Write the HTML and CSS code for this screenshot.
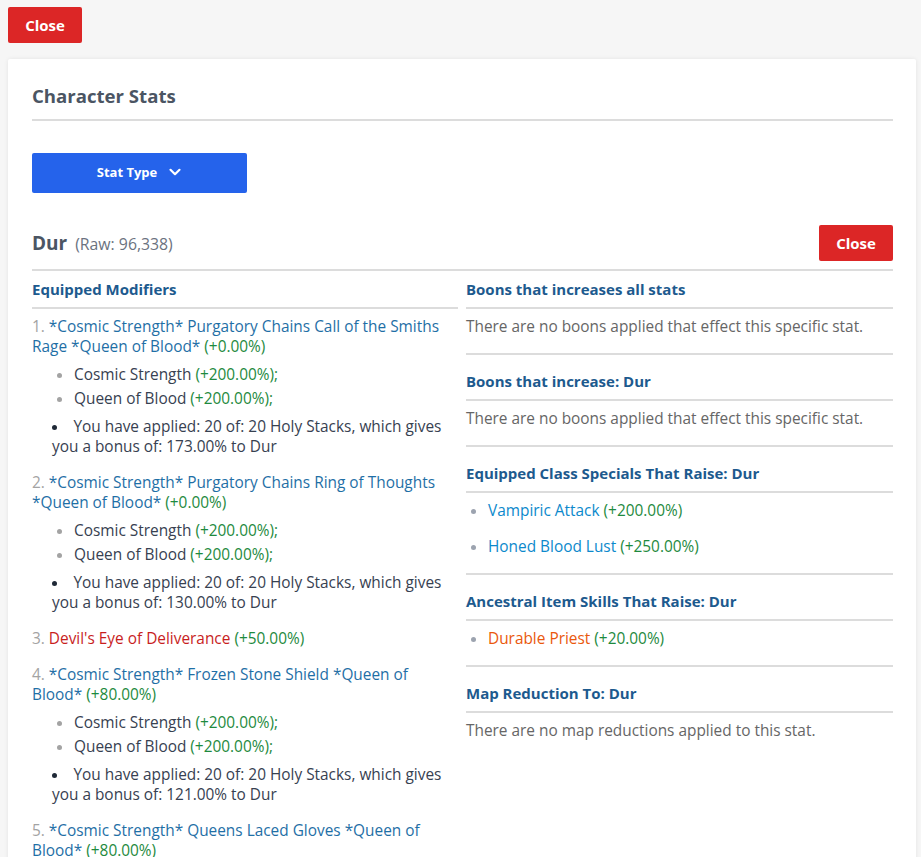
FILE: index.html
```html
<!DOCTYPE html>
<html lang="en">
<head>
<meta charset="utf-8">
<title>Character Stats</title>
<link rel="stylesheet" href="styles.css">
</head>
<body>
<div class="page">
  <button class="btn btn-red top-close">Close</button>
  <div class="card">
    <h2 class="card-title">Character Stats</h2>
    <hr class="rule">
    <button class="btn btn-blue dropdown"><span class="dd-label">Stat Type</span>
      <svg class="chev" width="14" height="14" viewBox="0 0 14 14"><path d="M2.5 4.8 L7 9.2 L11.5 4.8" fill="none" stroke="#fff" stroke-width="2.2" stroke-linecap="round" stroke-linejoin="round"/></svg>
    </button>
    <div class="stat-head">
      <div class="stat-name"><span class="stat-label">Dur</span><span class="stat-raw">(Raw: 96,338)</span></div>
      <button class="btn btn-red">Close</button>
    </div>
    <hr class="rule">
    <div class="cols">
      <div class="col">
        <h3 class="sec-title first">Equipped Modifiers</h3>
        <hr class="rule">
        <ol class="mods">
          <li class="mod">
            <p class="mod-line"><span class="num">1.</span> <span class="link">*Cosmic Strength* Purgatory Chains Call of the Smiths Rage *Queen of Blood*</span> <span class="pos">(+0.00%)</span></p>
            <ul class="affixes">
              <li>Cosmic Strength <span class="pos">(+200.00%);</span></li>
              <li>Queen of Blood <span class="pos">(+200.00%);</span></li>
            </ul>
            <ul class="holy"><li>You have applied: 20 of: 20 Holy Stacks, which gives you a bonus of: 173.00% to Dur</li></ul>
          </li>
          <li class="mod">
            <p class="mod-line"><span class="num">2.</span> <span class="link">*Cosmic Strength* Purgatory Chains Ring of Thoughts *Queen of Blood*</span> <span class="pos">(+0.00%)</span></p>
            <ul class="affixes">
              <li>Cosmic Strength <span class="pos">(+200.00%);</span></li>
              <li>Queen of Blood <span class="pos">(+200.00%);</span></li>
            </ul>
            <ul class="holy"><li>You have applied: 20 of: 20 Holy Stacks, which gives you a bonus of: 130.00% to Dur</li></ul>
          </li>
          <li class="mod">
            <p class="mod-line"><span class="num">3.</span> <span class="unique">Devil's Eye of Deliverance</span> <span class="pos">(+50.00%)</span></p>
          </li>
          <li class="mod">
            <p class="mod-line"><span class="num">4.</span> <span class="link">*Cosmic Strength* Frozen Stone Shield *Queen of Blood*</span> <span class="pos">(+80.00%)</span></p>
            <ul class="affixes">
              <li>Cosmic Strength <span class="pos">(+200.00%);</span></li>
              <li>Queen of Blood <span class="pos">(+200.00%);</span></li>
            </ul>
            <ul class="holy"><li>You have applied: 20 of: 20 Holy Stacks, which gives you a bonus of: 121.00% to Dur</li></ul>
          </li>
          <li class="mod">
            <p class="mod-line"><span class="num">5.</span> <span class="link">*Cosmic Strength* Queens Laced Gloves *Queen of Blood*</span> <span class="pos">(+80.00%)</span></p>
            <ul class="affixes">
              <li>Cosmic Strength <span class="pos">(+200.00%);</span></li>
              <li>Queen of Blood <span class="pos">(+200.00%);</span></li>
            </ul>
          </li>
        </ol>
      </div>
      <div class="col">
        <h3 class="sec-title first">Boons that increases all stats</h3>
        <hr class="rule">
        <p class="sec-body muted">There are no boons applied that effect this specific stat.</p>
        <hr class="rule">
        <h3 class="sec-title">Boons that increase: Dur</h3>
        <hr class="rule">
        <p class="sec-body muted">There are no boons applied that effect this specific stat.</p>
        <hr class="rule">
        <h3 class="sec-title">Equipped Class Specials That Raise: Dur</h3>
        <hr class="rule">
        <ul class="sec-body plain">
          <li><span class="skill">Vampiric Attack</span> <span class="pos">(+200.00%)</span></li>
          <li><span class="skill">Honed Blood Lust</span> <span class="pos">(+250.00%)</span></li>
        </ul>
        <hr class="rule">
        <h3 class="sec-title">Ancestral Item Skills That Raise: Dur</h3>
        <hr class="rule">
        <ul class="sec-body plain">
          <li><span class="ancestral">Durable Priest</span> <span class="pos">(+20.00%)</span></li>
        </ul>
        <hr class="rule">
        <h3 class="sec-title">Map Reduction To: Dur</h3>
        <hr class="rule">
        <p class="sec-body muted">There are no map reductions applied to this stat.</p>
      </div>
    </div>
  </div>
</div>
</body>
</html>
```
FILE: styles.css
```css
* { box-sizing: border-box; }
html, body { margin: 0; padding: 0; }
body {
  background: #f6f6f6;
  font-family: "Open Sans", Lato, sans-serif;
  font-size: 15.4px;
  line-height: 20px;
  color: #374151;
  overflow: hidden;
}
.page {
  padding: 7px 5px 0 8px;
}
.btn {
  font-family: inherit;
  border: none;
  border-radius: 2px;
  cursor: pointer;
  font-weight: 700;
  color: #fff;
}
.btn-red {
  background: #dc2626;
  font-size: 15px;
  height: 36px;
  width: 74px;
  padding: 0;
}
.top-close { display: block; }
.card {
  margin-top: 16px;
  background: #fff;
  border-radius: 2px;
  box-shadow: 0 0 4px rgba(0,0,0,0.08);
  padding: 24px 23px 0 24px;
  min-height: 820px;
}
.card-title {
  margin: 0 0 10px;
  font-size: 18.6px;
  line-height: 26px;
  font-weight: 700;
  color: #4b5563;
}
.rule {
  margin: 0;
  border: none;
  border-top: 2px solid #dcdcdc;
  height: 0;
}
.dropdown {
  margin-top: 32px;
  width: 215px;
  height: 40px;
  background: #2563eb;
  font-size: 13px;
  display: flex;
  align-items: center;
  justify-content: center;
  gap: 11px;
  padding: 0 0 3px;
  border-radius: 2px;
}
.chev { display: block; margin-top: 1px; }
.stat-head {
  margin-top: 32px;
  margin-bottom: 8px;
  display: flex;
  align-items: center;
  justify-content: space-between;
}
.stat-name { display: flex; align-items: baseline; gap: 8px; }
.stat-label { font-size: 19px; font-weight: 700; color: #4b5563; }
.stat-raw { font-size: 15.8px; color: #6b7280; }
.cols {
  display: grid;
  grid-template-columns: 426px 1fr;
  gap: 8px;
}
.sec-title {
  margin: 16px 0 8px;
  font-size: 15px;
  line-height: 20px;
  font-weight: 700;
  color: #1d5a8e;
}
.sec-title.first { margin-top: 8px; }
.sec-body { margin: 8px 0 16px; }
.muted { color: #666; }
.plain {
  list-style: disc;
  padding-left: 22px;
}
.plain li::marker { color: #9ca3af; }
.plain li + li { margin-top: 16px; }
.skill { color: #0c89cc; }
.ancestral { color: #ea580c; }
.pos { color: #1e8a3e; }
.link { color: #1f6fa6; }
.unique { color: #c81e1e; }
.num { color: #a3a3a3; }
.mods {
  list-style: none;
  margin: 8px 0 0;
  padding: 0;
}
.mod + .mod { margin-top: 16px; }
.mod-line { margin: 0; }
.affixes {
  margin: 8px 0 0;
  padding-left: 42px;
  list-style: disc;
}
.affixes li::marker { color: #a3a3a3; }
.affixes li + li { margin-top: 4px; }
.holy {
  margin: 8px 0 0;
  padding-left: 20px;
  list-style: disc inside;
}
.holy li::marker { color: #1f2937; }
```
